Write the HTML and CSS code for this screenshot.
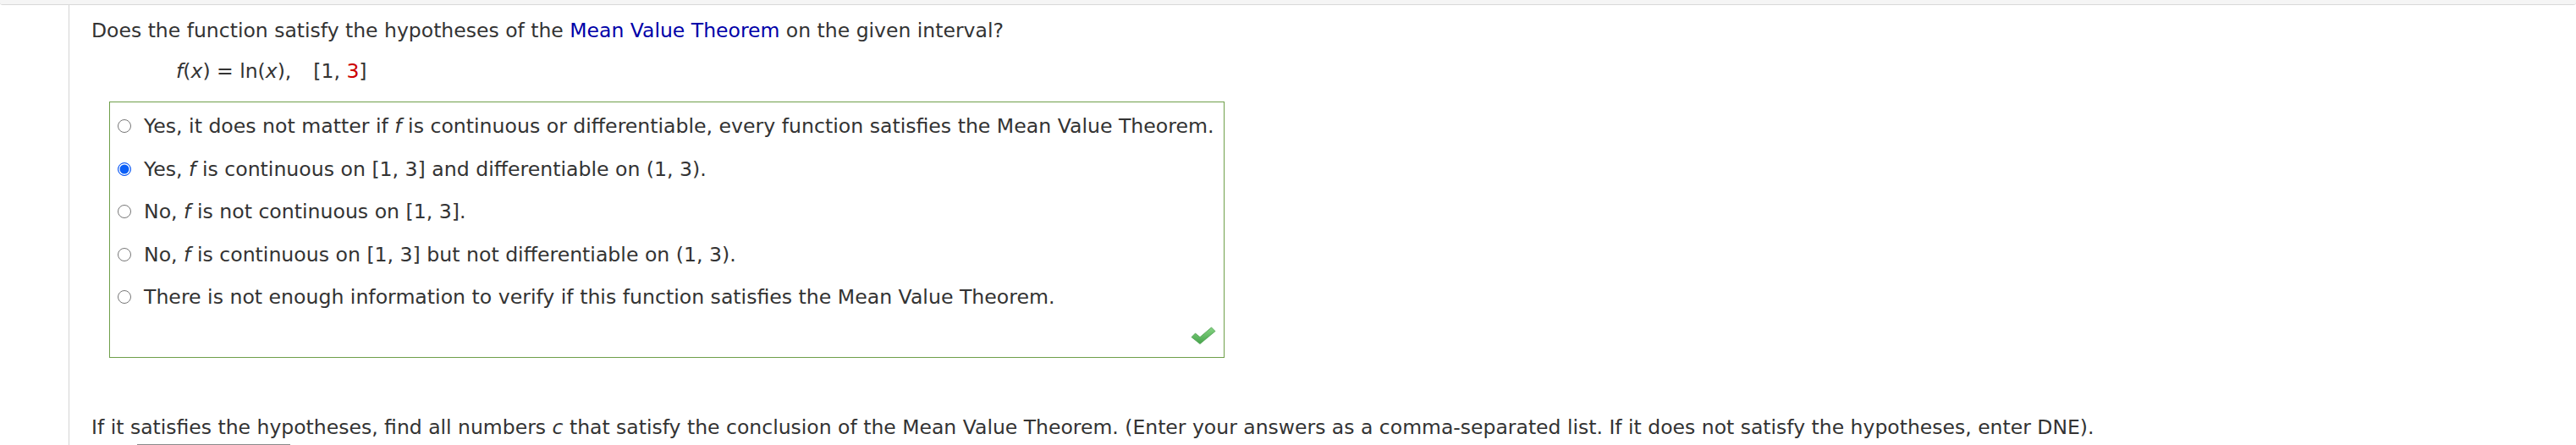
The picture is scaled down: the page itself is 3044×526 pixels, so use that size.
FILE: index.html
```html
<!DOCTYPE html>
<html lang="en">
<head>
    <meta charset="UTF-8">
    <meta name="viewport" content="width=device-width, initial-scale=1.0">
    <title>Mean Value Theorem</title>

    <link rel="stylesheet" href="styles.css">
</head>
<body>

<div class="top-bar"></div>

<div class="page">
    <div class="question">
        <p class="prompt">Does the function satisfy the hypotheses of the <a href="#" class="term">Mean Value Theorem</a> on the given interval?</p>

        <p class="formula"><i>f</i>(<i>x</i>) = ln(<i>x</i>),<span class="gap"></span>[1, <span class="red">3</span>]</p>

        <div class="choices">
            <label class="choice"><input type="radio" name="mvt"><span>Yes, it does not matter if <i>f</i> is continuous or differentiable, every function satisfies the Mean Value Theorem.</span></label>
            <label class="choice"><input type="radio" name="mvt" checked><span>Yes, <i>f</i> is continuous on [1, 3] and differentiable on (1, 3).</span></label>
            <label class="choice"><input type="radio" name="mvt"><span>No, <i>f</i> is not continuous on [1, 3].</span></label>
            <label class="choice"><input type="radio" name="mvt"><span>No, <i>f</i> is continuous on [1, 3] but not differentiable on (1, 3).</span></label>
            <label class="choice"><input type="radio" name="mvt"><span>There is not enough information to verify if this function satisfies the Mean Value Theorem.</span></label>

            <svg class="check" width="30" height="22" viewBox="0 0 30 22">
                <defs>
                    <linearGradient id="checkGrad" x1="0" y1="0" x2="0" y2="1">
                        <stop offset="0" stop-color="#86d483"/>
                        <stop offset="1" stop-color="#46a44b"/>
                    </linearGradient>
                </defs>
                <path d="M1 12.5 L5.5 8 L11 12.5 L24.5 1 L29 5.5 L11 20.5 Z" fill="url(#checkGrad)" stroke="#4a9d4e" stroke-width="0.8" stroke-linejoin="round"/>
            </svg>
        </div>

        <p class="prompt followup">If it satisfies the hypotheses, find all numbers <i>c</i> that satisfy the conclusion of the Mean Value Theorem. (Enter your answers as a comma-separated list. If it does not satisfy the hypotheses, enter DNE).</p>

        <div class="answer-box"></div>
    </div>
</div>

</body>
</html>
```

FILE: styles.css
```css
body {
    font-family: 'DejaVu Sans', Verdana, sans-serif;
    margin: 0;
    padding: 0;
    background-color: #fff;
    color: #333;
    overflow: hidden;
}

.top-bar {
    height: 5px;
    background-color: #f5f5f5;
    border-bottom: 1px solid #d9d9d9;
    border-radius: 0 0 3px 3px;
}

.page {
    margin-left: 81px;
    border-left: 1px solid #d4d4d4;
    padding-left: 26px;
    height: 520px;
    overflow: hidden;
}

.prompt {
    margin: 0;
    padding-top: 16px;
    font-size: 23.5px;
    line-height: 28px;
}

.term {
    color: #0000a8;
    text-decoration: none;
}

.formula {
    margin: 0;
    padding-top: 20px;
    padding-left: 100px;
    font-size: 23.5px;
    line-height: 28px;
}

.gap {
    display: inline-block;
    width: 26px;
}

.red {
    color: #c00;
}

.choices {
    position: relative;
    margin: 22px 0 0 21px;
    width: 1316px;
    height: 298px;
    border: 1px solid #6f9f4a;
    padding-top: 3px;
    box-sizing: content-box;
}

.choice {
    display: flex;
    align-items: center;
    height: 50.5px;
    font-size: 23.6px;
    padding-left: 9px;
}

.choice input {
    appearance: none;
    -webkit-appearance: none;
    width: 16px;
    height: 16px;
    margin: 0 15px 0 0;
    border: 1px solid #777;
    border-radius: 50%;
    background-color: #fff;
    flex-shrink: 0;
}

.choice input:checked {
    border: 1.5px solid #0b57f5;
    background-color: #0b5ff7;
    box-shadow: inset 0 0 0 1.5px #fff;
}

.check {
    position: absolute;
    right: 9px;
    bottom: 14px;
}

.followup {
    padding-top: 68px;
}

.answer-box {
    margin: 6px 0 0 54px;
    width: 181px;
    height: 1px;
    border-top: 1px solid #8a8a8a;
}
```
